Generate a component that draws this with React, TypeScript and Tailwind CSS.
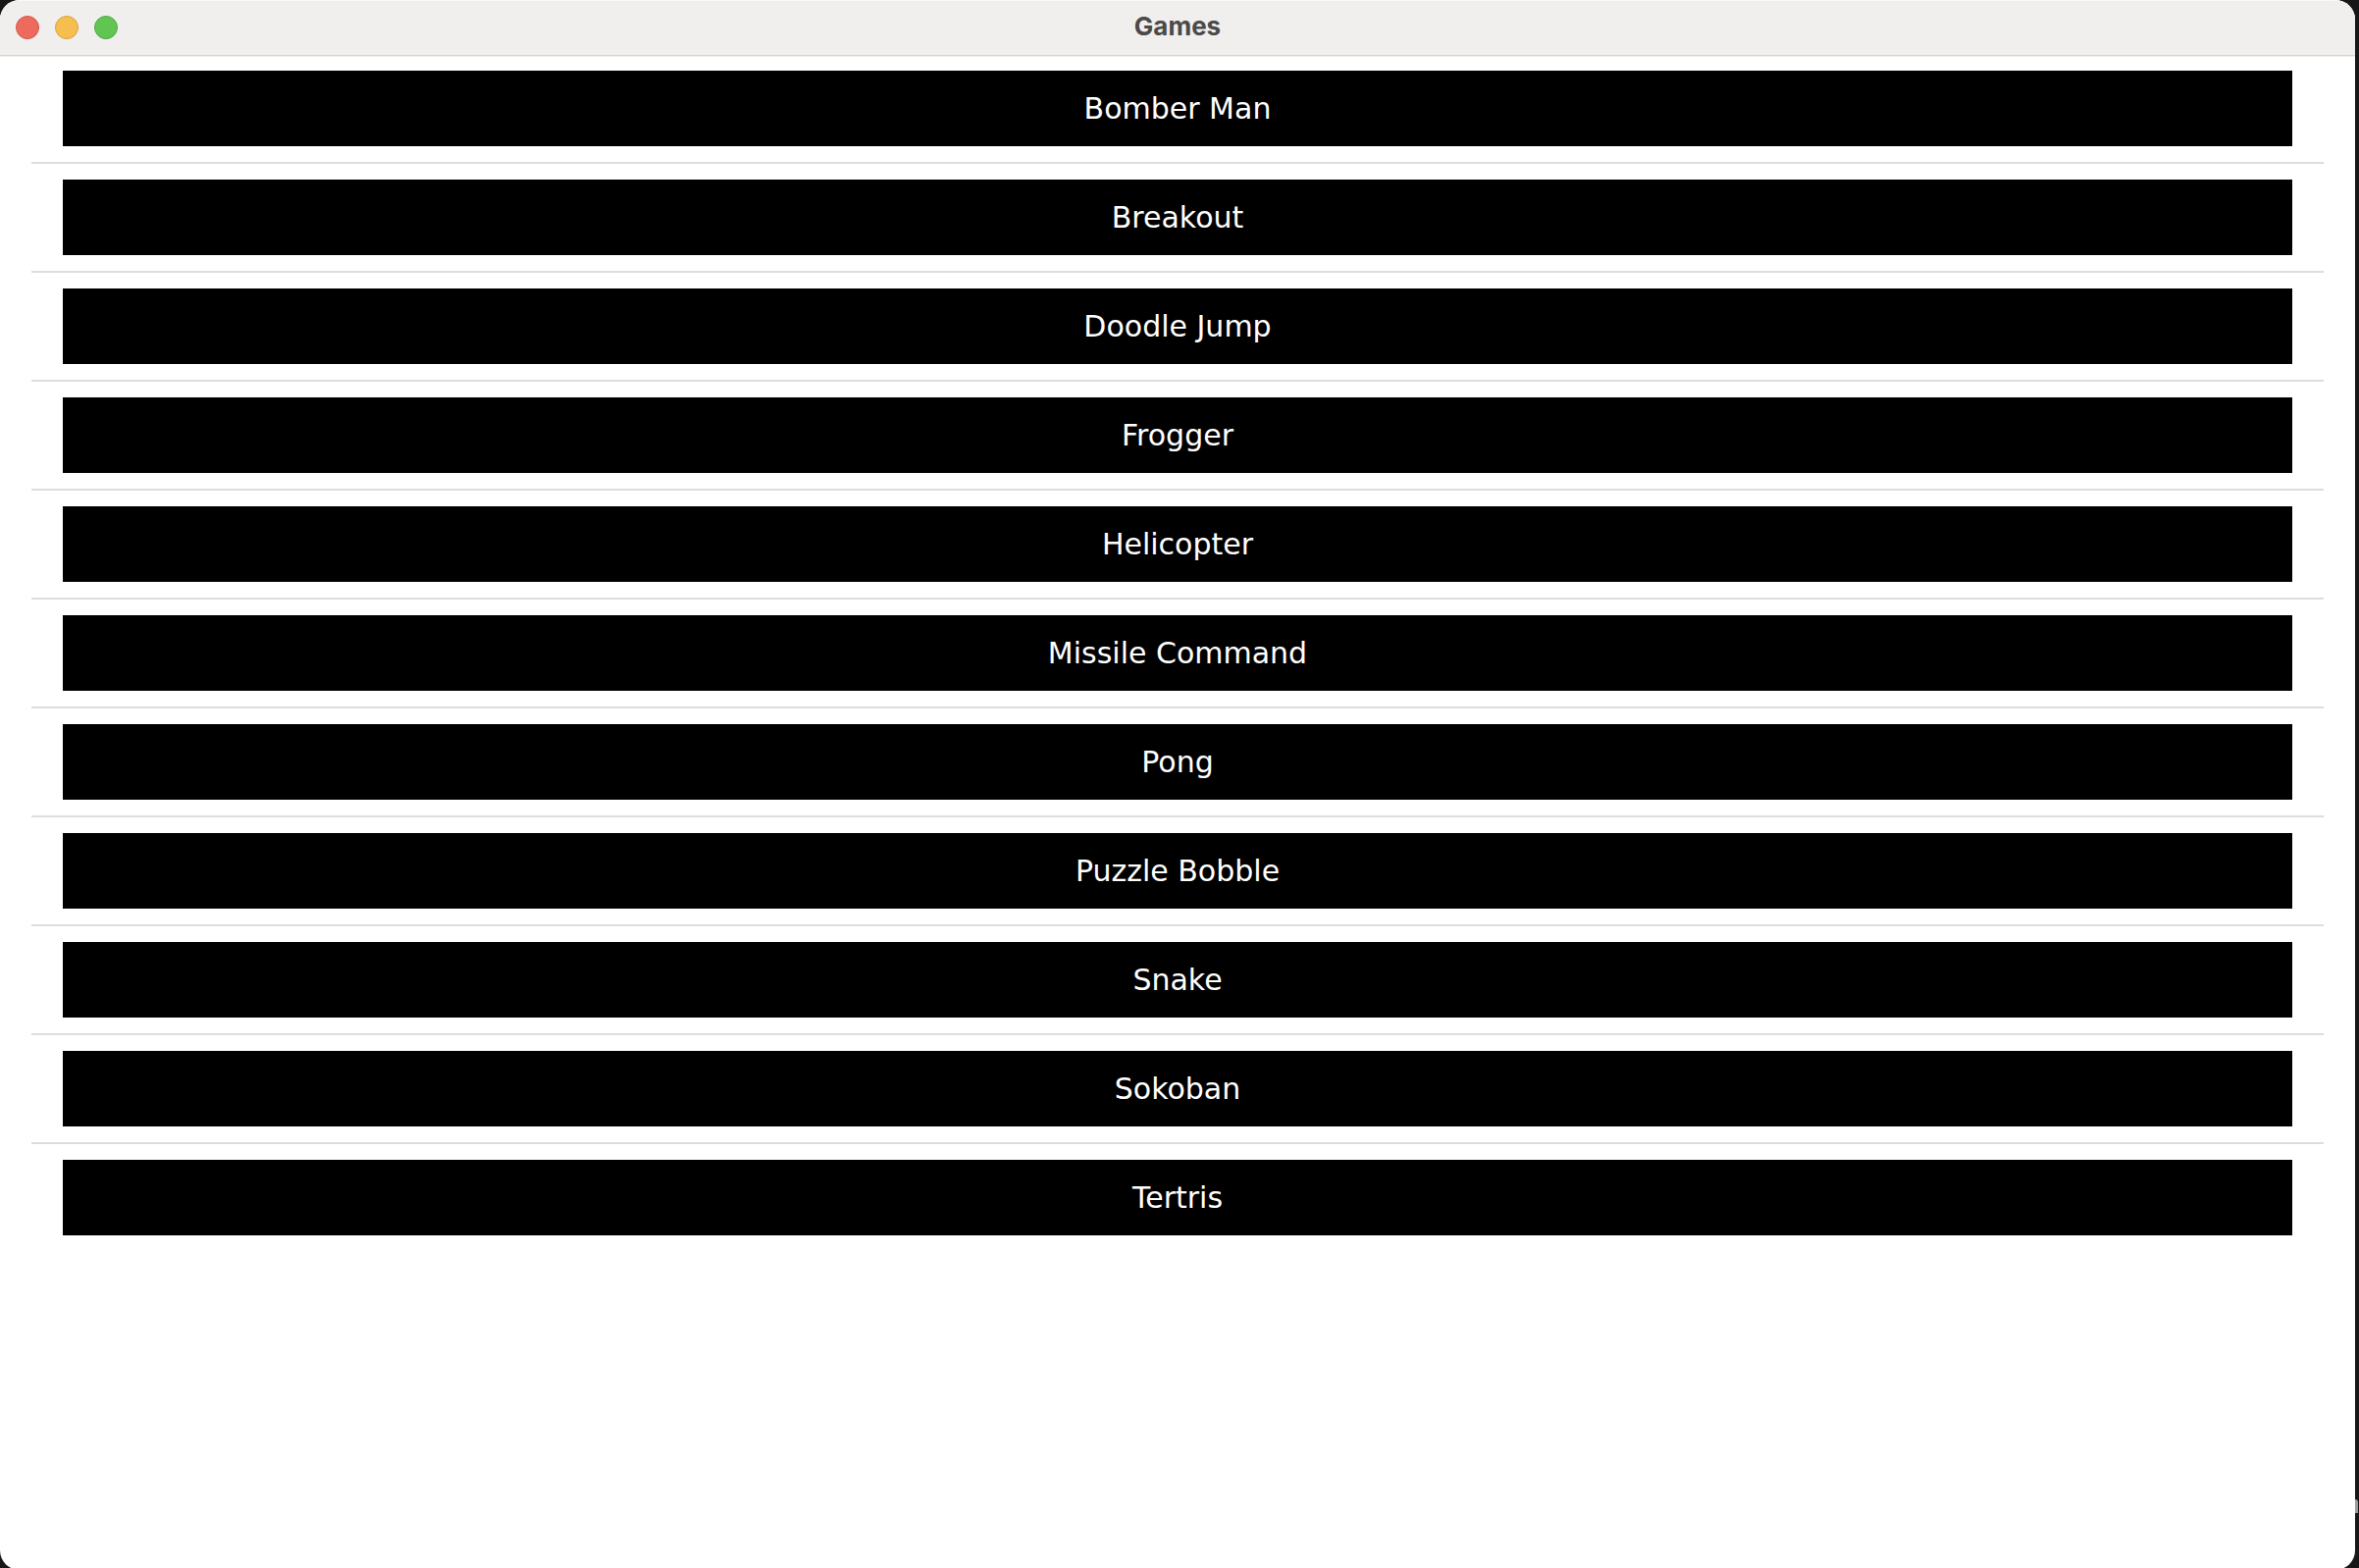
import React from 'react';

interface Game {
  id: string;
  name: string;
}

const GAMES: Game[] = [
  { id: 'bomber-man', name: 'Bomber Man' },
  { id: 'breakout', name: 'Breakout' },
  { id: 'doodle-jump', name: 'Doodle Jump' },
  { id: 'frogger', name: 'Frogger' },
  { id: 'helicopter', name: 'Helicopter' },
  { id: 'missile-command', name: 'Missile Command' },
  { id: 'pong', name: 'Pong' },
  { id: 'puzzle-bobble', name: 'Puzzle Bobble' },
  { id: 'snake', name: 'Snake' },
  { id: 'sokoban', name: 'Sokoban' },
  { id: 'tertris', name: 'Tertris' },
];

const WINDOW_CONTROLS = [
  { label: 'Close', colorClass: 'bg-[#ec6a5e] border-[#d9544a]' },
  { label: 'Minimize', colorClass: 'bg-[#f4bf4f] border-[#d9a23c]' },
  { label: 'Zoom', colorClass: 'bg-[#61c554] border-[#51a73e]' },
];

const TitleBar: React.FC<{ title: string }> = ({ title }) => (
  <header className="grid grid-cols-3 items-center h-[57px] px-4 bg-[#f0efee] border-b border-b-[#d6d5d5] shadow-[inset_0_1px_0_#f8f8f7,0_1px_0_#efefef]">
    <div className="flex gap-4">
      {WINDOW_CONTROLS.map(({ label, colorClass }) => (
        <button key={label} type="button" aria-label={label} className={`size-6 rounded-full border ${colorClass}`} />
      ))}
    </div>
    <h1 className="pb-0.5 text-center text-[26px] leading-8 font-bold text-[#4b4a49] font-['Inter',sans-serif]">{title}</h1>
  </header>
);

const GameList: React.FC<{ games: Game[] }> = ({ games }) => (
  <ul className="px-8 divide-y-2 divide-[#dddddd]">
    {games.map(game => (
      <li key={game.id} className="px-8 py-4 first:pt-[15px]">
        <button
          type="button"
          className="block w-full py-4 bg-black text-white text-center text-[30px] leading-[45px] font-['Verdana','DejaVu_Sans',sans-serif]"
        >
          {game.name}
        </button>
      </li>
    ))}
  </ul>
);

const App: React.FC = () => (
  <div className="flex h-screen overflow-hidden bg-[#171717]">
    {/* bottom edge runs slightly past the screen */}
    <main className="grow -mb-0.5 rounded-[20px] overflow-hidden bg-white">
      <TitleBar title="Games" />
      <GameList games={GAMES} />
    </main>
    {/* sliver of desktop, with the scroll thumb of the window behind */}
    <div className="flex flex-col justify-end w-1 pb-14">
      <div className="w-[3px] h-3.5 rounded-tr bg-[#9a9a98]" />
    </div>
  </div>
);

export default App;
